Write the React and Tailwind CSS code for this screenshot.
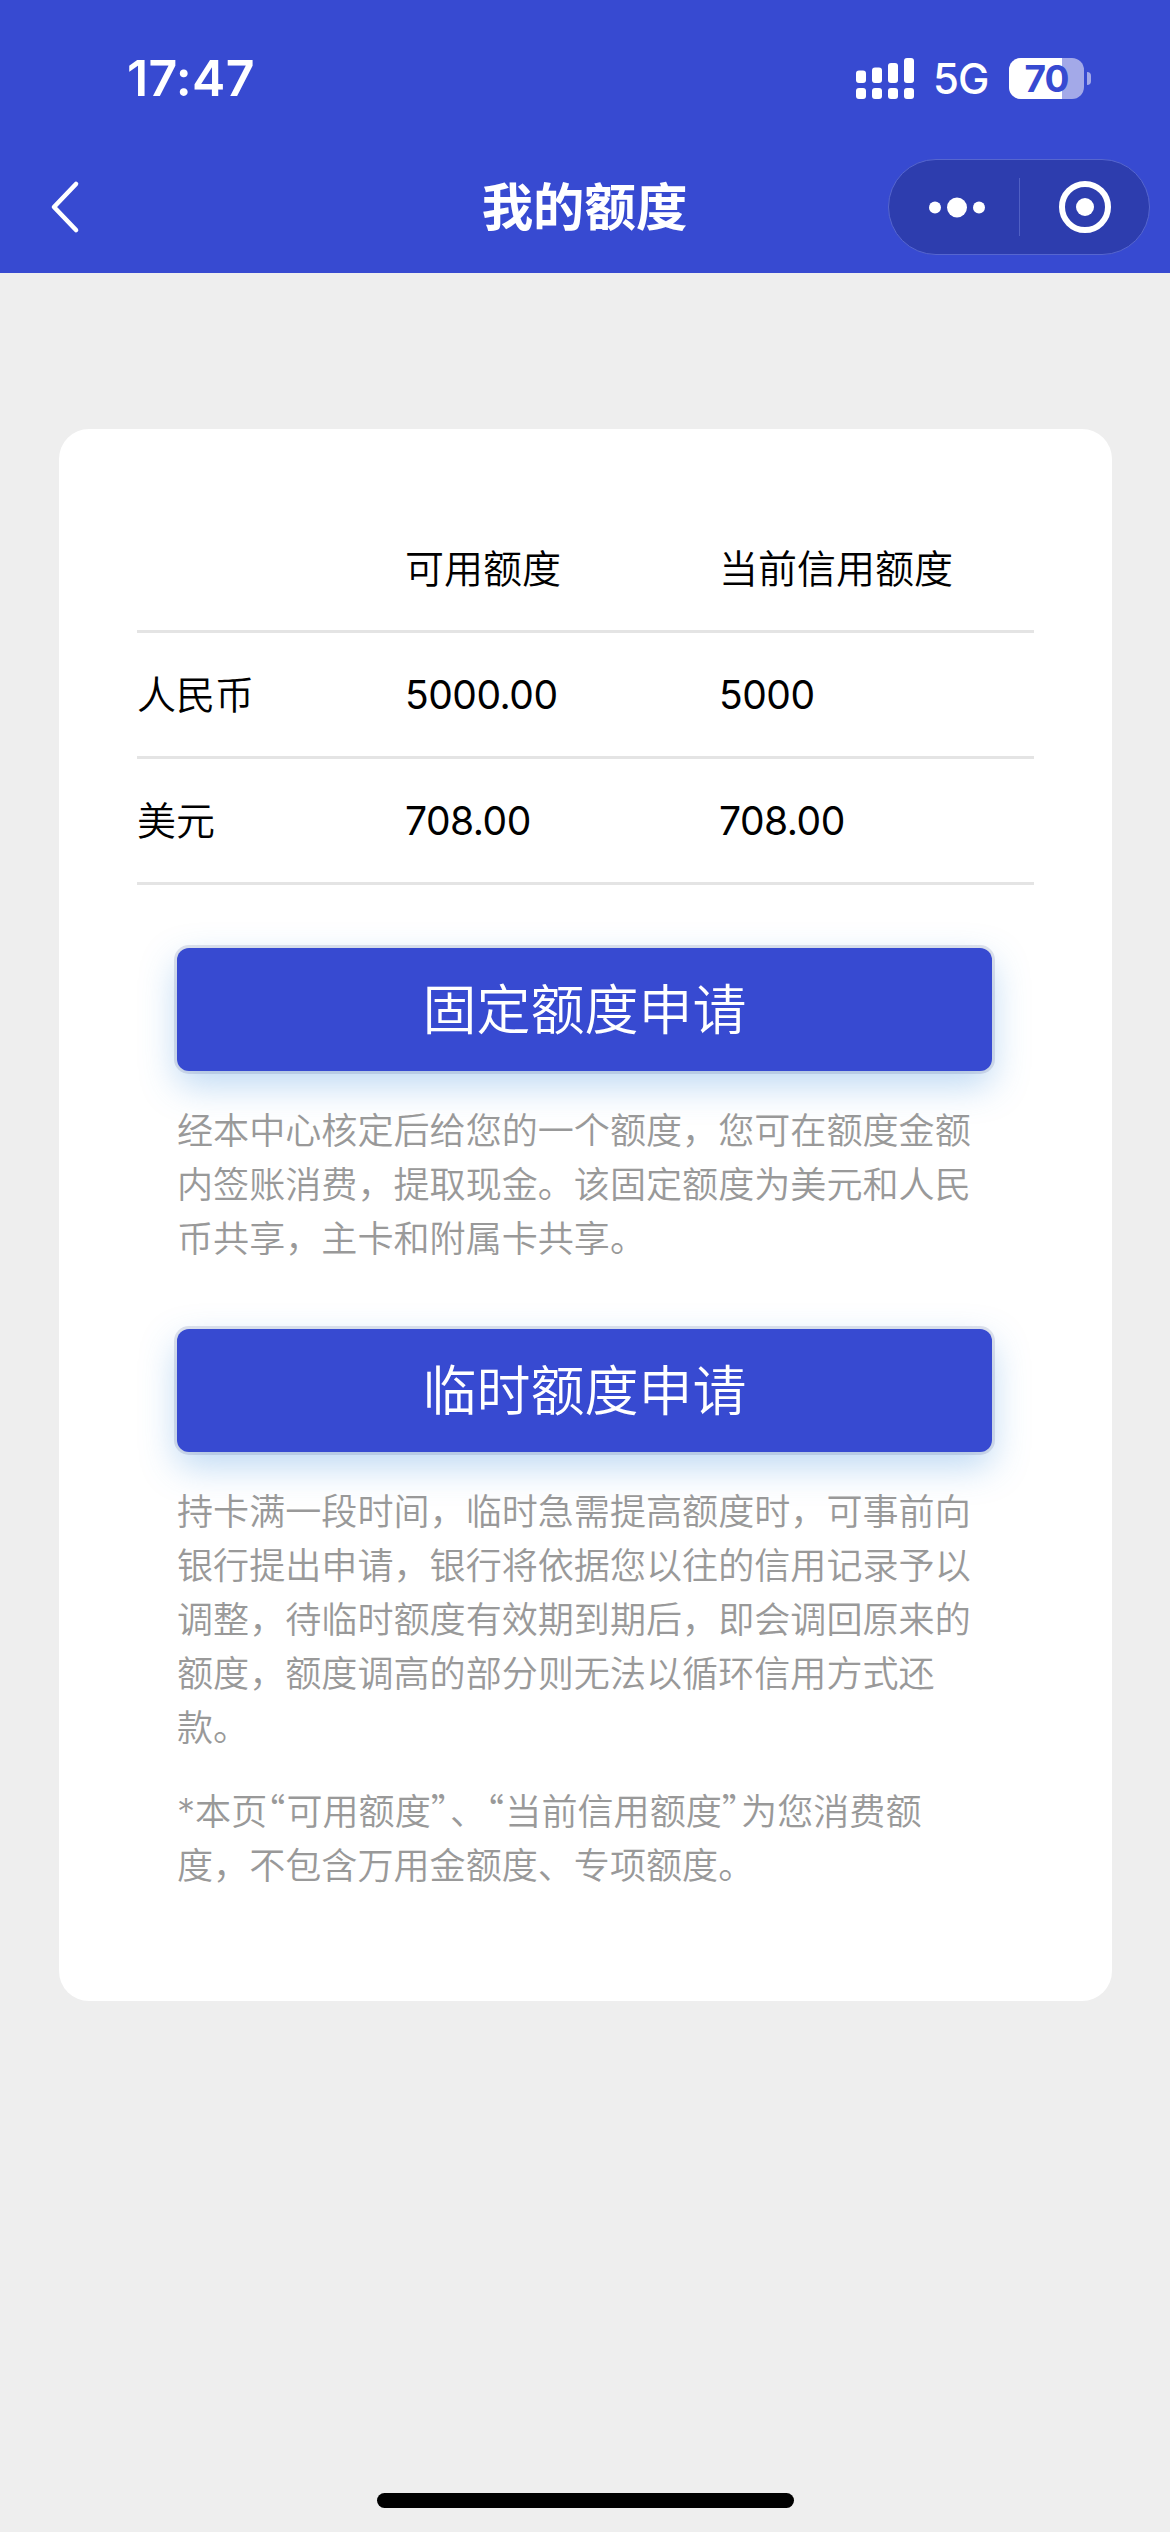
const quotaRows = [
  { currency: '人民币', available: '5000.00', current: '5000' },
  { currency: '美元', available: '708.00', current: '708.00' },
]

function SignalIcon() {
  const bars = [
    { x: 0, y: 12.5 },
    { x: 16, y: 9.5 },
    { x: 32, y: 5 },
    { x: 48, y: 0 },
  ]
  return (
    <svg width="58" height="41" viewBox="0 0 58 41" fill="#fff">
      {bars.map((bar) => (
        <g key={bar.x}>
          <rect x={bar.x} y={bar.y} width="10" height={25 - bar.y} rx="3" />
          <rect x={bar.x} y="30" width="10" height="11" rx="3" />
        </g>
      ))}
    </svg>
  )
}

function Battery({ level }) {
  return (
    <div className="flex items-center gap-[3px]">
      <div className="relative h-[41px] w-[75px] rounded-[12px] bg-[#a3a9e8]">
        <div className="h-full rounded-l-[12px] bg-white" style={{ width: `${level}%` }} />
        <span className="absolute inset-x-0 -top-[2px] text-center text-[37px] leading-[45px] font-bold tracking-[-1px] text-[#374ad1]">
          {level}
        </span>
      </div>
      <div className="h-[13px] w-[4px] rounded-r-full bg-[#a3a9e8]" />
    </div>
  )
}

function StatusBar() {
  return (
    <div className="flex h-[141px] items-center justify-between pt-[15px] pr-[79px] pl-[127px] text-white">
      <span className="text-[50px] leading-none font-semibold tracking-[0.3px]">17:47</span>
      <div className="flex items-center">
        <SignalIcon />
        <span className="ml-[19px] w-[76px] pt-[2px] text-[42px] leading-none font-medium tracking-[-1px]">5G</span>
        <Battery level={70} />
      </div>
    </div>
  )
}

function NavBar() {
  return (
    <div className="grid h-[132px] grid-cols-[1fr_auto_1fr] items-center pr-[20px] pl-[50px] text-white">
      <svg width="32" height="54" viewBox="0 0 32 54" fill="none" stroke="#fff" strokeWidth="4.6" strokeLinecap="round" strokeLinejoin="round">
        <path d="M26 4 4 27l22 23" />
      </svg>
      <h1 className="pt-[2px] pr-[31px] text-[51.4px] leading-none font-bold">我的额度</h1>
      <div className="flex h-[96px] w-[262px] items-center justify-self-end rounded-full border border-[#5666cf] bg-[#2d3dae]">
        <svg width="130" height="60" viewBox="0 0 130 60" fill="#fff">
          <circle cx="46" cy="30.5" r="6" />
          <circle cx="68" cy="30.5" r="10" />
          <circle cx="90" cy="30.5" r="6" />
        </svg>
        <div className="h-[58px] w-px bg-[#5060c4]" />
        <svg width="129" height="60" viewBox="0 0 129 60" fill="none">
          <circle cx="65" cy="30" r="23" stroke="#fff" strokeWidth="6" />
          <circle cx="65" cy="30" r="9" fill="#fff" />
        </svg>
      </div>
    </div>
  )
}

function QuotaRow({ label, available, current, numeric }) {
  const valueClass = numeric ? 'text-[39px] font-[380] tracking-[-0.5px]' : ''
  return (
    <div className="grid h-[126px] grid-cols-[268px_314px_1fr] items-center border-b-[3px] border-[#e4e4e4] text-[39px] leading-none font-[350] text-black">
      <span>{label}</span>
      <span className={valueClass}>{available}</span>
      <span className={valueClass}>{current}</span>
    </div>
  )
}

function ApplyButton({ children }) {
  return (
    <button className="flex h-[123px] w-full items-center justify-center rounded-[12px] bg-[#374ad1] pt-[2px] text-[54px] leading-none font-[350] text-white shadow-[0_0_0_3px_rgba(90,100,150,0.18),0_14px_36px_rgba(60,140,220,0.34)]">
      {children}
    </button>
  )
}

// Curly quotes take the half-width CJK form instead of a full em
function NoteLine({ text }) {
  return (
    <span className="block">
      {text.split(/([“”])/).map((part, i) =>
        part === '“' || part === '”' ? (
          <span key={i} className="font-['Noto_Sans_CJK_SC'] leading-none tracking-[1.2px] [font-feature-settings:'halt']">{part}</span>
        ) : (
          part
        )
      )}
    </span>
  )
}

function Note({ lines }) {
  return (
    <p className="text-[36.1px] leading-[54px] font-[350] whitespace-nowrap text-[#999]">
      {lines.map((line) => (
        <NoteLine key={line} text={line} />
      ))}
    </p>
  )
}

function App() {
  return (
    <div className="flex h-[2532px] w-[1170px] flex-col overflow-hidden bg-[#eee] font-[Inter,'Noto_Sans_CJK_SC',sans-serif]">
      <header className="h-[273px] bg-[#374ad1]">
        <StatusBar />
        <NavBar />
      </header>

      <main className="flex-1 pt-[156px] pr-[58px] pl-[59px]">
        <section className="h-[1572px] rounded-[30px] bg-white px-[78px] pt-[78px]">
          <QuotaRow available="可用额度" current="当前信用额度" />
          {quotaRows.map((row) => (
            <QuotaRow key={row.currency} label={row.currency} available={row.available} current={row.current} numeric />
          ))}

          <div className="flex flex-col pt-[63px] pr-[42px] pl-[40px]">
            <ApplyButton>固定额度申请</ApplyButton>
            <div className="mt-[33px] mb-[63px]">
              <Note
                lines={[
                  '经本中心核定后给您的一个额度，您可在额度金额',
                  '内签账消费，提取现金。该固定额度为美元和人民',
                  '币共享，主卡和附属卡共享。',
                ]}
              />
            </div>
            <ApplyButton>临时额度申请</ApplyButton>
            <div className="mt-[33px] flex flex-col gap-[30px]">
              <Note
                lines={[
                  '持卡满一段时间，临时急需提高额度时，可事前向',
                  '银行提出申请，银行将依据您以往的信用记录予以',
                  '调整，待临时额度有效期到期后，即会调回原来的',
                  '额度，额度调高的部分则无法以循环信用方式还',
                  '款。',
                ]}
              />
              <Note
                lines={[
                  '*本页“可用额度”、“当前信用额度”为您消费额',
                  '度，不包含万用金额度、专项额度。',
                ]}
              />
            </div>
          </div>
        </section>
      </main>

      <div className="mx-auto mb-[24px] h-[15px] w-[417px] rounded-full bg-black" />
    </div>
  )
}

export default App
